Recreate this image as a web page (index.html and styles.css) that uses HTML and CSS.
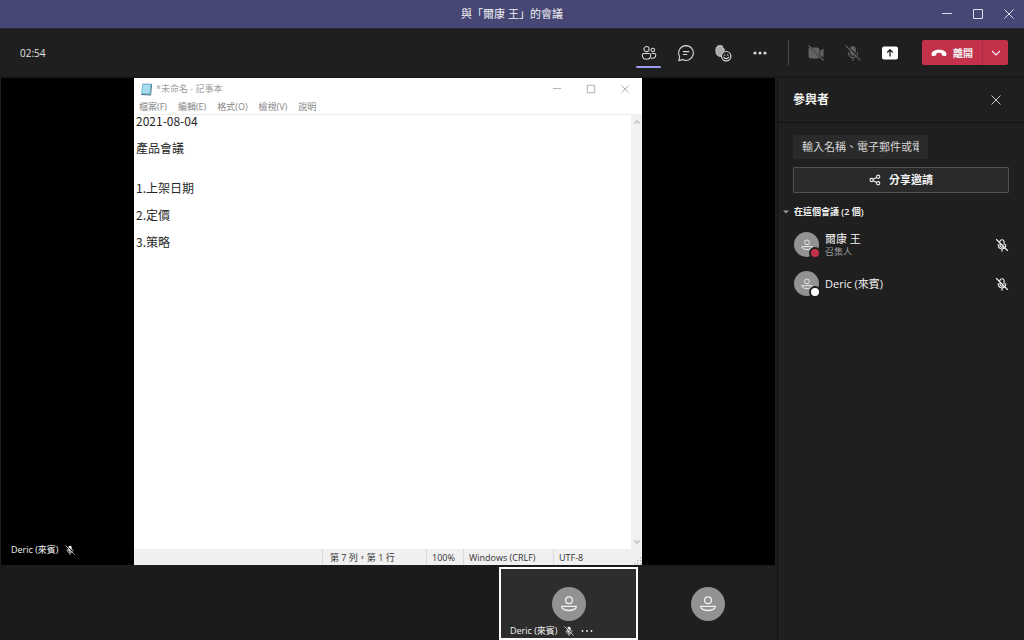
FILE: index.html
```html
<!DOCTYPE html>
<html lang="zh-Hant">
<head>
<meta charset="utf-8">
<meta name="viewport" content="width=device-width, initial-scale=1">
<title>與「爾康 王」的會議</title>
<link rel="stylesheet" href="styles.css">
</head>
<body>
<svg class="sprite" aria-hidden="true">
  <symbol id="i-min" viewBox="0 0 12 12"><path d="M1 5.500h10" fill="none" stroke="currentColor"/></symbol>
  <symbol id="i-max" viewBox="0 0 12 12"><path d="M1.500 1.500h9v9h-9z" fill="none" stroke="currentColor"/></symbol>
  <symbol id="i-close" viewBox="0 0 12 12"><path d="M1.500 1.500l9 9M10.500 1.500l-9 9" fill="none" stroke="currentColor"/></symbol>
  <symbol id="i-person" viewBox="0 0 20 20"><g fill="none" stroke="currentColor" stroke-width="1.300"><circle cx="10" cy="6.300" r="3.400"/><path d="M2.700 12.300h14.600v.5c0 2-3.400 3.700-7.300 3.700s-7.300-1.700-7.300-3.700z"/></g></symbol>
  <symbol id="i-mic-off" viewBox="0 0 16 16"><g fill="none" stroke="currentColor" stroke-width="1.300" stroke-linecap="round"><path d="M5.700 5.700V8.300a2.400 2.400 0 0 0 3.900 1.700M5.700 3.800a2.400 2.400 0 0 1 4.700.2v3.800M3.700 7.600v.7a4.200 4.200 0 0 0 7 3.100M12.300 7.600v.7c0 .7-.2 1.300-.4 1.800M8 12.600V15M1.700 1.700l12.600 12.600"/></g></symbol>
  <symbol id="i-mic-solid" viewBox="0 0 16 16"><path d="M5.200 5V8A2.800 2.800 0 0 0 9.700 10zM5.300 3.200A2.800 2.800 0 0 1 10.800 4V8.300z" fill="currentColor"/><path d="M3.500 7.500V8a4.500 4.500 0 0 0 7.500 3.400M12.500 7.500V8c0 .8-.2 1.500-.5 2M8 12.500V15.500M1 1l14 14" fill="none" stroke="currentColor" stroke-width="1.100" stroke-linecap="round"/></symbol>
</svg>

<header class="titlebar">
  <h1 class="titlebar-text">與「爾康 王」的會議</h1>
  <div class="window-controls">
    <button type="button" aria-label="最小化"><svg class="s12"><use href="#i-min"/></svg></button>
    <button type="button" aria-label="最大化"><svg class="s12"><use href="#i-max"/></svg></button>
    <button type="button" aria-label="關閉"><svg class="s12"><use href="#i-close"/></svg></button>
  </div>
</header>

<nav class="toolbar" aria-label="會議控制">
  <time class="timer">02:54</time>
  <button class="tool tool-active" type="button" aria-label="參與者">
    <svg class="s16" viewBox="0 0 18 18" fill="none" stroke="currentColor" stroke-width="1.200"><circle cx="6.200" cy="4.600" r="2.900"/><circle cx="13.300" cy="5.600" r="2"/><path d="M3.100 9.600h6.200a1.600 1.600 0 0 1 1.600 1.600c0 3-1.600 4.900-4.700 4.900s-4.700-1.900-4.700-4.900a1.600 1.600 0 0 1 1.600-1.600zM12 9.600h3.200a1.400 1.400 0 0 1 1.400 1.400c0 2.600-1.300 4-3.600 4-.8 0-1.400-.1-1.900-.5"/></svg>
  </button>
  <button class="tool" type="button" aria-label="聊天">
    <svg class="s18" viewBox="0 0 18 18" fill="none" stroke="currentColor" stroke-width="1.100" stroke-linecap="round" stroke-linejoin="round"><path d="M9 1.600a7.400 7.400 0 1 1-3.400 14l-3.800 1 .9-3.900A7.400 7.400 0 0 1 9 1.600zM6.300 7.600h5.600M6.300 10.500h3.500"/></svg>
  </button>
  <button class="tool" type="button" aria-label="反應">
    <svg class="s18" viewBox="0 0 18 18"><path d="M2 8V4.200c0-1.100 1.300-1.200 1.500-.2V2.500c0-1.200 1.500-1.300 1.700-.2.1-1.300 1.700-1.300 1.800 0 .3-1 1.700-.8 1.700.4v2.600c.3-1.300 1.700-1 1.600.1L10 7.300a5.200 5.200 0 0 0-3.500 5.200C3.700 12.200 2 10.600 2 8z" fill="#aaa" stroke="#ddd" stroke-width=".8"/><g fill="none" stroke="currentColor" stroke-width="1.200" stroke-linecap="round"><circle cx="12.200" cy="12.200" r="4.700"/><path d="M9.800 13.200c.9 1.900 3.900 1.900 4.800 0"/></g><circle cx="10.600" cy="11" r=".8" fill="currentColor"/><circle cx="13.800" cy="11" r=".8" fill="currentColor"/></svg>
  </button>
  <button class="tool" type="button" aria-label="更多">
    <svg class="s18" viewBox="0 0 18 18" fill="currentColor"><circle cx="4" cy="9" r="1.600"/><circle cx="9" cy="9" r="1.600"/><circle cx="14" cy="9" r="1.600"/></svg>
  </button>
  <span class="divider"></span>
  <button class="tool tool-dim" type="button" aria-label="攝影機已關閉">
    <svg class="s18" viewBox="0 0 18 18"><path d="M1.500 5.500c0-.9.300-1.500.8-1.900L12.200 13.500c-.4.600-1.100 1-2.200 1H4A2.500 2.500 0 0 1 1.500 12zM4.600 3.500H10A2.500 2.500 0 0 1 12.500 6v5.400zM13.200 7l3.300-2.400v9l-3.300-2.300z" fill="currentColor"/><path d="M1.500 1.500l15 15" stroke="currentColor" stroke-width="1.200"/></svg>
  </button>
  <button class="tool tool-dim" type="button" aria-label="麥克風已關閉"><svg class="s16"><use href="#i-mic-solid"/></svg></button>
  <button class="tool tool-share" type="button" aria-label="分享">
    <svg class="s18" viewBox="0 0 18 18"><rect x="1" y="2.500" width="16" height="13" rx="2" fill="#fff"/><path d="M9 12.500V5.800M6.200 8.500L9 5.700l2.800 2.800" fill="none" stroke="#222" stroke-width="1.300"/></svg>
  </button>
  <div class="leave">
    <button class="leave-main" type="button">
      <svg class="s16" viewBox="0 0 16 16"><path d="M.6 9C.6 6.500 3.800 4.800 8 4.800S15.400 6.500 15.400 9v.7c0 1-.8 1.600-1.800 1.400l-1.700-.3c-.8-.1-1.300-.7-1.300-1.500V8.200a9 9 0 0 0-5.200 0v1.100c0 .8-.5 1.400-1.300 1.500l-1.700.3c-1 .2-1.800-.4-1.800-1.400z" fill="#fff"/></svg>
      <span>離開</span>
    </button>
    <button class="leave-more" type="button" aria-label="更多離開選項"><svg class="s12" viewBox="0 0 12 12"><path d="M2 4l4 4 4-4" fill="none" stroke="currentColor" stroke-width="1.100"/></svg></button>
  </div>
</nav>

<div class="content">
  <main class="meeting">
    <section class="stage" aria-label="共用畫面">
      <div class="stage-side"><div class="caption">Deric (來賓) <svg class="s10"><use href="#i-mic-solid"/></svg></div></div>
      <article class="notepad">
        <header class="np-title">
          <svg class="s14" viewBox="0 0 14 14"><path d="M3.500 1.500l9 .2-1.200 11.100-9.300-.6z" fill="#72b9d3"/><path d="M4.300 3l6.900.1-.9 8.300-7-.5z" fill="#a9dcec"/><path d="M12.300 1.700l.8.700-1.100 11-9.600-.5V12l8.900.5z" fill="#466f83"/><path d="M4 1.200h8.500" stroke="#ddd" stroke-dasharray="1 1"/></svg>
          <span class="np-name">*未命名 - 記事本</span>
          <div class="np-controls">
            <button type="button" aria-label="最小化"><svg class="s10"><use href="#i-min"/></svg></button>
            <button type="button" aria-label="最大化"><svg class="s10"><use href="#i-max"/></svg></button>
            <button type="button" aria-label="關閉"><svg class="s10"><use href="#i-close"/></svg></button>
          </div>
        </header>
        <div class="np-menu">
          <button type="button">檔案(F)</button><button type="button">編輯(E)</button><button type="button">格式(O)</button><button type="button">檢視(V)</button><button type="button">說明</button>
        </div>
        <div class="np-body">
          <div class="np-text">
            <p>2021-08-04</p>
            <p>產品會議</p>
            <p class="np-section">1.上架日期</p>
            <p>2.定價</p>
            <p>3.策略</p>
          </div>
          <div class="np-scroll">
            <svg class="s10" viewBox="0 0 10 10"><path d="M2.500 6.500L5 4l2.500 2.500" fill="none" stroke="currentColor" stroke-width="1.400"/></svg>
            <svg class="s10" viewBox="0 0 10 10"><path d="M2.500 3.500L5 6l2.500-2.500" fill="none" stroke="currentColor" stroke-width="1.400"/></svg>
          </div>
        </div>
        <footer class="np-status">
          <span class="np-pos">第 7 列，第 1 行</span><span class="np-zoom">100%</span><span class="np-eol">Windows (CRLF)</span><span class="np-enc">UTF-8</span>
          <svg class="s8" viewBox="0 0 8 8" fill="#bbb"><path d="M6 0h1.500v1.500H6zM6 3h1.500v1.500H6zM3 3h1.500v1.500H3zM6 6h1.500v1.500H6zM3 6h1.500v1.500H3zM0 6h1.500v1.500H0z"/></svg>
        </footer>
      </article>
      <div></div>
    </section>
    <section class="filmstrip" aria-label="參與者畫面">
      <div class="tile tile-active">
        <span class="avatar avatar-large"><svg class="s20"><use href="#i-person"/></svg></span>
        <div class="caption tile-caption">Deric (來賓) <svg class="s10"><use href="#i-mic-solid"/></svg>
          <button type="button" aria-label="更多選項"><svg class="s12" viewBox="0 0 12 12" fill="currentColor"><circle cx="1.500" cy="6" r=".9"/><circle cx="6" cy="6" r=".9"/><circle cx="10.500" cy="6" r=".9"/></svg></button>
        </div>
      </div>
      <div class="tile">
        <span class="avatar avatar-large"><svg class="s20"><use href="#i-person"/></svg></span>
      </div>
    </section>
  </main>

  <aside class="panel">
    <header class="panel-head">
      <h2>參與者</h2>
      <button type="button" aria-label="關閉面板"><svg class="s12"><use href="#i-close"/></svg></button>
    </header>
    <div class="panel-body">
      <input class="invite-input" type="text" aria-label="邀請某人" placeholder="輸入名稱、電子郵件或電話號碼">
      <button class="share-invite" type="button">
        <svg class="s12" viewBox="0 0 14 14" fill="none" stroke="currentColor" stroke-width="1.200"><circle cx="3" cy="7" r="1.900"/><circle cx="10.700" cy="3.200" r="1.900"/><circle cx="10.700" cy="10.800" r="1.900"/><path d="M4.700 6.200L9 4M4.700 7.800L9 10"/></svg>
        <span>分享邀請</span>
      </button>
      <button class="group-toggle" type="button" aria-expanded="true"><svg class="s6" viewBox="0 0 6 6"><path d="M0 1.500h6L3 4.500z" fill="#999"/></svg><span>在這個會議 (2 個)</span></button>
      <ul class="people">
        <li>
          <span class="avatar"><svg class="s14"><use href="#i-person"/></svg><i class="presence presence-busy"></i></span>
          <div class="person"><span>爾康 王</span><small>召集人</small></div>
          <svg class="s14"><use href="#i-mic-off"/></svg>
        </li>
        <li>
          <span class="avatar"><svg class="s14"><use href="#i-person"/></svg><i class="presence"></i></span>
          <div class="person"><span>Deric (來賓)</span></div>
          <svg class="s14"><use href="#i-mic-off"/></svg>
        </li>
      </ul>
    </div>
  </aside>
</div>
</body>
</html>
```
FILE: styles.css
```css
* { box-sizing: border-box; }

body {
  margin: 0;
  min-height: 100vh;
  display: flex;
  flex-direction: column;
  background: #1f1f1f;
  color: #f2f2f2;
  font-family: "Open Sans", "Noto Sans CJK TC", sans-serif;
  font-size: 11px;
  line-height: 14px;
}

h1, h2, p, ul { margin: 0; padding: 0; }

button {
  display: flex;
  align-items: center;
  justify-content: center;
  padding: 0;
  border: 0;
  background: none;
  color: inherit;
  font: inherit;
}

svg { flex: none; display: block; }
.sprite { position: absolute; width: 0; height: 0; }
.s6 { width: 6px; height: 6px; }
.s8 { width: 8px; height: 8px; }
.s10 { width: 10px; height: 10px; }
.s12 { width: 12px; height: 12px; }
.s14 { width: 14px; height: 14px; }
.s16 { width: 16px; height: 16px; }
.s18 { width: 18px; height: 18px; }
.s20 { width: 20px; height: 20px; }

/* Window title */
.titlebar {
  display: grid;
  grid-template-columns: 1fr auto 1fr;
  align-items: center;
  height: 29px;
  background: #464775;
  border-bottom: 1px solid #252637;
}
.titlebar-text { grid-column: 2; font-size: 11px; font-weight: 400; }
.window-controls { display: flex; justify-content: flex-end; }
.window-controls button { width: 31px; height: 28px; color: #dcdcec; }

/* Meeting controls */
.toolbar {
  display: flex;
  align-items: center;
  height: 49px;
  padding-right: 16px;
  border-bottom: 2px solid #191919;
}
.timer { margin: 0 auto 0 20px; font-size: 10px; color: #e0e0e0; }
.tool { width: 37px; height: 29px; color: #d6d6d6; }
.tool-active { position: relative; }
.tool-active::after {
  content: "";
  position: absolute;
  left: 6px;
  right: 6px;
  bottom: -1px;
  height: 2px;
  border-radius: 1px;
  background: #9b9ef0;
}
.tool-dim { color: #636363; }
.divider { width: 1px; height: 25px; margin: 0 8px 0 10px; background: #4a4a4a; }
.leave {
  display: flex;
  height: 25px;
  margin-left: 14px;
  border-radius: 2px;
  background: #c4314b;
  font-size: 10px;
  font-weight: 700;
}
.leave-main { width: 60px; gap: 6px; }
.leave-more { width: 26px; border-left: 1px solid #a92b43; }

/* Main area */
.content { flex: 1; display: flex; }
.meeting { flex: 1; display: flex; flex-direction: column; min-width: 0; }
.stage {
  flex: 1;
  display: grid;
  grid-template-columns: 133fr 508fr 133fr;
  margin: 0 2px 0 1px;
  background: #000;
}
.stage-side { display: flex; align-items: flex-end; padding: 0 0 8px 10px; }
.caption { display: flex; align-items: center; gap: 6px; font-size: 9px; white-space: nowrap; }

/* Shared text editor window */
.notepad {
  display: flex;
  flex-direction: column;
  background: #fff;
  color: #222;
  font-size: 9px;
}
.np-title { display: flex; align-items: center; gap: 3px; height: 22px; padding-left: 5px; color: #a0a0a0; }
.np-name { flex: 1; }
.np-controls { display: flex; }
.np-controls button { width: 34px; height: 22px; }
.np-menu {
  display: flex;
  gap: 11px;
  height: 15px;
  padding-left: 5px;
  border-bottom: 1px solid #ececec;
  color: #858585;
}
.np-body { flex: 1; display: flex; }
.np-text {
  flex: 1;
  padding-left: 2px;
  color: #262626;
  font-family: "Noto Sans CJK TC", sans-serif;
  font-size: 12px;
}
.np-text p { line-height: 12px; margin-bottom: 15px; }
.np-text .np-section { margin-top: 28px; }
.np-scroll {
  display: flex;
  flex-direction: column;
  align-items: center;
  justify-content: space-between;
  width: 11px;
  padding: 2px 0;
  background: #f1f1f1;
  color: #bdbdbd;
}
.np-status {
  display: flex;
  justify-content: flex-end;
  align-items: stretch;
  height: 16px;
  background: #f0f0f0;
  color: #333;
}
.np-status span { padding-left: 5px; border-left: 1px solid #dcdcdc; line-height: 17px; }
.np-status .np-pos { width: 104px; padding-left: 7px; }
.np-status .np-zoom { width: 37px; }
.np-status .np-eol { width: 90px; }
.np-status .np-enc { width: 81px; }
.np-status svg { align-self: flex-end; }

/* Participant tiles */
.filmstrip {
  display: flex;
  justify-content: flex-end;
  height: 75px;
  padding-top: 2px;
  background: #1b1b1b;
}
.tile {
  position: relative;
  display: flex;
  align-items: center;
  justify-content: center;
  width: 139px;
  background: #1f1f1f;
}
.tile-active { border: 2px solid #fff; background: #2d2d2d; }
.tile-caption { position: absolute; left: 9px; bottom: 0; }
.tile-caption button { margin-left: 1px; }

.avatar {
  position: relative;
  display: flex;
  align-items: center;
  justify-content: center;
  flex: none;
  width: 25px;
  height: 25px;
  border-radius: 50%;
  background: #929292;
  color: #f0f0f0;
}
.avatar-large { width: 34px; height: 34px; }
.presence {
  position: absolute;
  right: -2px;
  bottom: -2px;
  width: 12px;
  height: 12px;
  border: 2px solid #1f1f1f;
  border-radius: 50%;
  background: #fff;
}
.presence-busy { background: #c4314b; }

/* Participants panel */
.panel { width: 247px; border-left: 1px solid #111; }
.panel-head {
  display: flex;
  align-items: center;
  justify-content: space-between;
  height: 45px;
  padding: 0 22px 0 15px;
  border-bottom: 1px solid #121212;
}
.panel-head h2 { font-size: 12px; font-weight: 700; }
.panel-head button { color: #c8c8c8; }
.panel-body { display: flex; flex-direction: column; padding: 12px 15px 0; }
.invite-input {
  width: 135px;
  height: 24px;
  padding: 0 9px 1px;
  border: 0;
  border-radius: 2px;
  background: #2a2a2a;
  color: #e0e0e0;
  font: inherit;
}
.invite-input::placeholder { color: #d8d8d8; opacity: 1; }
.share-invite {
  gap: 8px;
  height: 26px;
  margin-top: 8px;
  border: 1px solid #505050;
  border-radius: 1px;
  background: #2a2a2a;
  font-weight: 700;
}
.group-toggle {
  align-self: flex-start;
  gap: 5px;
  margin: 12px 0 0 -10px;
  font-size: 9px;
  font-weight: 600;
}
.people { list-style: none; margin-top: 6px; }
.people li { display: flex; align-items: center; gap: 6px; height: 39px; padding-left: 1px; }
.person { flex: 1; display: flex; flex-direction: column; }
.person small { font-size: 9px; line-height: 11px; color: #999; }
```
